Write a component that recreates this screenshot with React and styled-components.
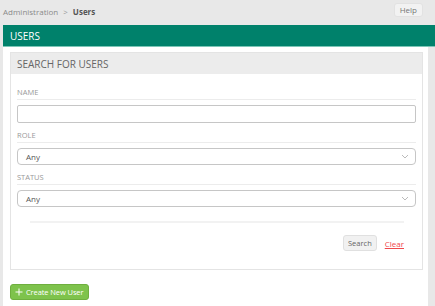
import styled, { createGlobalStyle } from "styled-components";

const GlobalStyle = createGlobalStyle`
  html, body {
    margin: 0;
    padding: 0;
    background: #e8e8e8;
    font-family: "Open Sans", "Liberation Sans", sans-serif;
  }
  * { box-sizing: border-box; }
`;

const TopBar = styled.div`
  height: 25px;
  display: flex;
  align-items: flex-start;
  justify-content: space-between;
  padding: 3px 12px 0 3px;
`;

const Crumbs = styled.div`
  display: flex;
  align-items: center;
  gap: 5px;
  font-size: 8px;
  line-height: 12px;
  margin-top: 3px;
  color: #8a8a8a;
`;

const Sep = styled.span`
  font-size: 8px;
  color: #999;
`;

const Current = styled.span`
  color: #555;
  font-weight: 700;
`;

const HelpButton = styled.button`
  height: 14px;
  padding: 0 5px;
  border: 1px solid #e2e2e2;
  border-radius: 3px;
  background: #f2f2f2;
  color: #777;
  font-family: inherit;
  font-size: 8px;
  line-height: 12px;
`;

const Header = styled.div`
  margin-left: 3px;
  height: 22px;
  background: #00816b;
  border-bottom: 1px solid #7cc6b7;
  color: #fff;
  font-size: 10px;
  display: flex;
  align-items: center;
  padding-left: 7px;
`;

const Content = styled.div`
  margin: 0 7px 0 3px;
  background: #fff;
  min-height: 260px;
  padding: 5px 5px 8px 7px;
`;

const Panel = styled.div`
  border: 1px solid #e4e4e4;
`;

const PanelTitle = styled.div`
  height: 21px;
  background: #ececec;
  color: #666;
  font-size: 10px;
  display: flex;
  align-items: center;
  padding-left: 6px;
`;

const PanelBody = styled.div`
  padding: 6px 6px 18px 6px;
`;

const Label = styled.div`
  padding-top: 5px;
  line-height: 14px;
  font-size: 7.5px;
  color: #999;
  text-transform: uppercase;
  border-bottom: 1px solid #ececec;
  margin-bottom: 5px;
`;

const TextInput = styled.input`
  display: block;
  width: 100%;
  height: 18px;
  border: 1px solid #c6c6c6;
  border-radius: 2px;
  outline: none;
`;

const SelectBox = styled.div`
  height: 17px;
  border: 1px solid #c6c6c6;
  border-radius: 4px;
  display: flex;
  align-items: center;
  justify-content: space-between;
  padding: 0 6px 0 8px;
  font-size: 8px;
  color: #555;
`;

const Divider = styled.div`
  margin: 14px 12px 0 13px;
  height: 2px;
  background: #f2f2f2;
`;

const Actions = styled.div`
  display: flex;
  justify-content: flex-end;
  align-items: center;
  gap: 8px;
  margin-top: 12px;
  padding-right: 12px;
`;

const SearchButton = styled.button`
  height: 16px;
  padding: 0 4px;
  border: 1px solid #e0e0e0;
  border-radius: 3px;
  background: #f1f1f1;
  color: #666;
  font-family: inherit;
  font-size: 7.5px;
  line-height: 14px;
`;

const ClearLink = styled.a`
  color: #f0484c;
  font-size: 8px;
  text-decoration: underline;
`;

const CreateButton = styled.button`
  margin-top: 14px;
  height: 16px;
  padding: 0 5px 0 4px;
  display: flex;
  align-items: center;
  gap: 3px;
  border: 1px solid #6faf3f;
  border-radius: 3px;
  background: #7ec34c;
  color: #fff;
  font-family: inherit;
  font-size: 7.5px;
  letter-spacing: -0.1px;
`;

const Chevron = () => (
  <svg width="8" height="5" viewBox="0 0 8 5">
    <path d="M1 1 L4 4 L7 1" fill="none" stroke="#aaa" strokeWidth="0.8" />
  </svg>
);

const Plus = () => (
  <svg width="8" height="8" viewBox="0 0 8 8">
    <path d="M4 0.5 V7.5 M0.5 4 H7.5" stroke="#fff" strokeWidth="1" />
  </svg>
);

const Field = ({ label, children }) => (
  <>
    <Label>{label}</Label>
    {children}
  </>
);

export default function App() {
  return (
    <>
      <GlobalStyle />
      <TopBar>
        <Crumbs>
          <span>Administration</span>
          <Sep>&gt;</Sep>
          <Current>Users</Current>
        </Crumbs>
        <HelpButton>Help</HelpButton>
      </TopBar>
      <Header>USERS</Header>
      <Content>
        <Panel>
          <PanelTitle>SEARCH FOR USERS</PanelTitle>
          <PanelBody>
            <Field label="Name">
              <TextInput />
            </Field>
            <Field label="Role">
              <SelectBox>
                Any
                <Chevron />
              </SelectBox>
            </Field>
            <Field label="Status">
              <SelectBox>
                Any
                <Chevron />
              </SelectBox>
            </Field>
            <Divider />
            <Actions>
              <SearchButton>Search</SearchButton>
              <ClearLink href="#">Clear</ClearLink>
            </Actions>
          </PanelBody>
        </Panel>
        <CreateButton>
          <Plus />
          Create New User
        </CreateButton>
      </Content>
    </>
  );
}
